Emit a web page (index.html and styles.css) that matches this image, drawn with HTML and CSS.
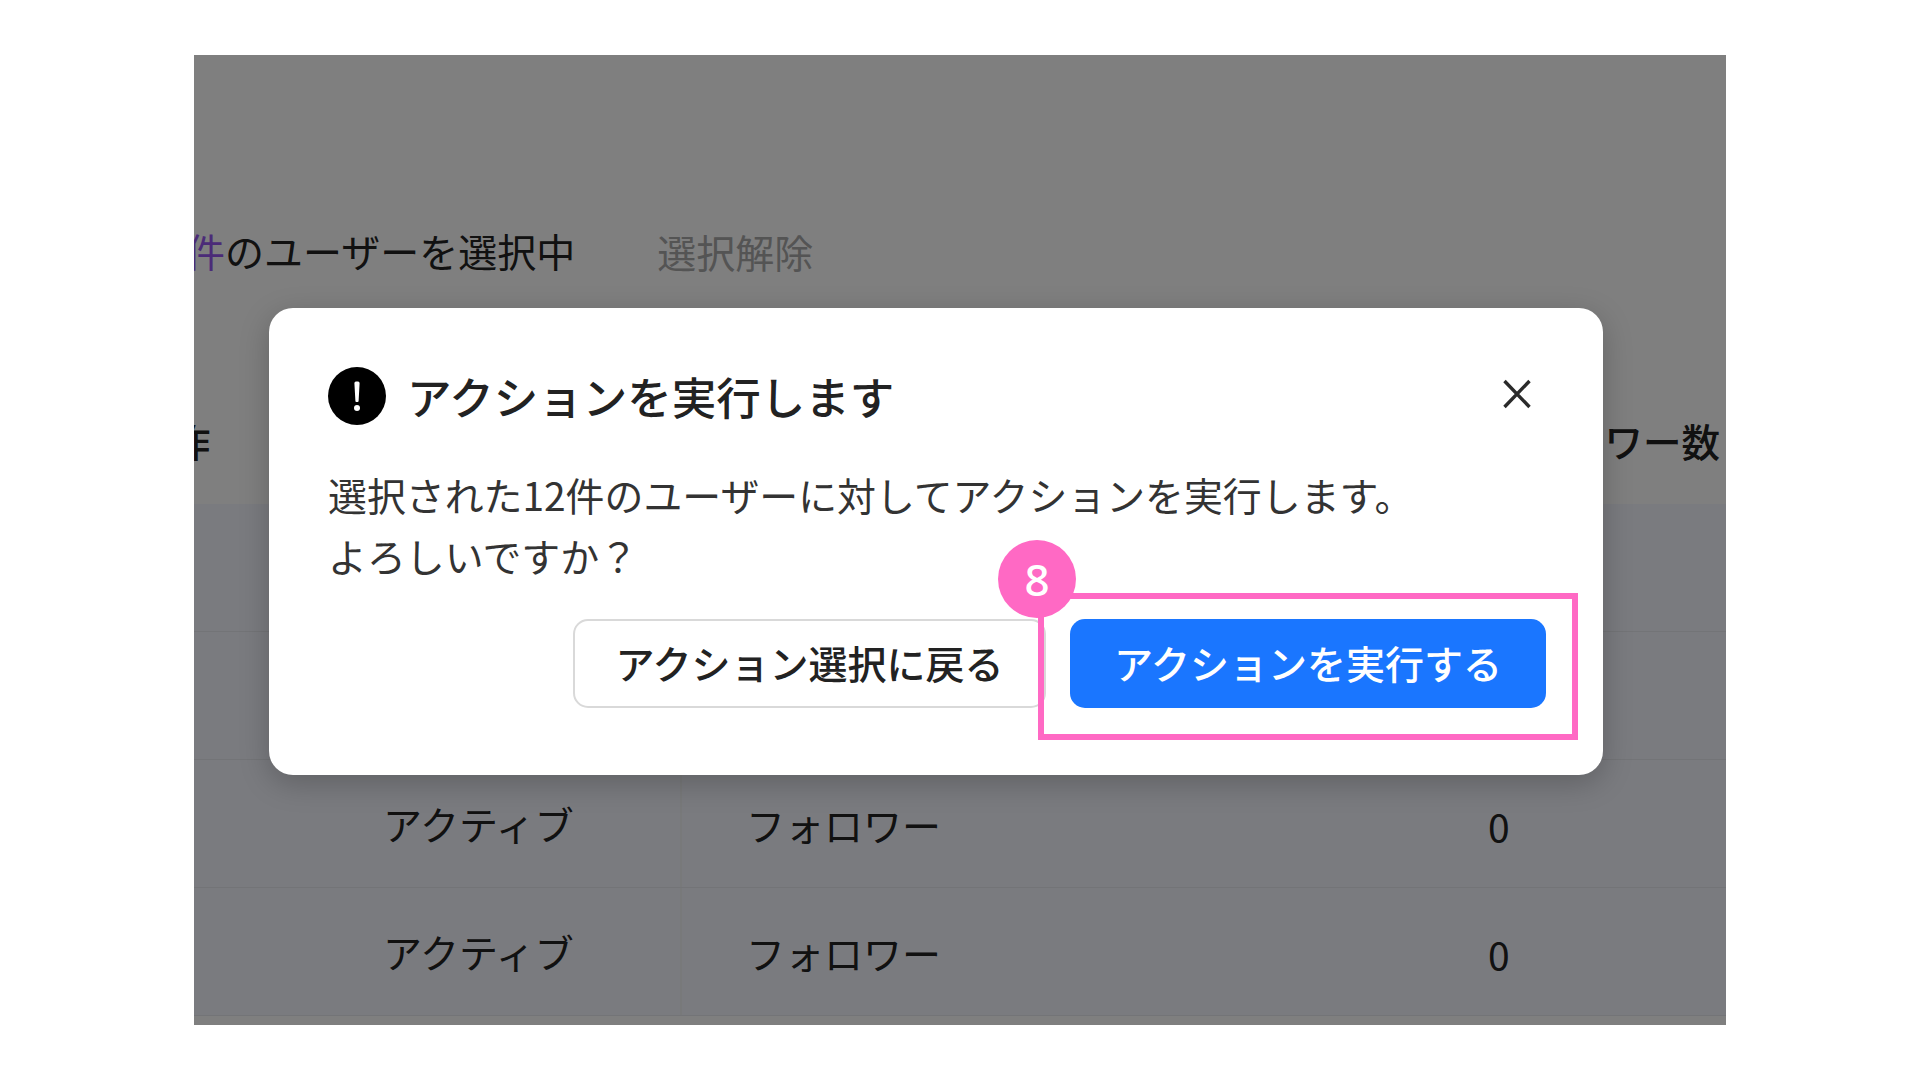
FILE: index.html
```html
<!DOCTYPE html>
<html lang="ja">
<head>
<meta charset="utf-8">
<title>アクションを実行します</title>
<link rel="stylesheet" href="styles.css">
</head>
<body>
<main class="panel">
  <div class="toolbar">
    <span class="selected"><span class="count">件</span>のユーザーを選択中</span>
    <span class="clear">選択解除</span>
  </div>
  <div class="table-head">
    <span class="head-action">作</span>
    <span class="head-followers">フォロワー数</span>
  </div>
  <div class="row"><span class="cell-status">アクティブ</span><span class="cell-type">フォロワー</span><span class="cell-num">0</span></div>
  <div class="row"><span class="cell-status">アクティブ</span><span class="cell-type">フォロワー</span><span class="cell-num">0</span></div>
  <div class="row"><span class="cell-status">アクティブ</span><span class="cell-type">フォロワー</span><span class="cell-num">0</span></div>
  <div class="row"><span class="cell-status">アクティブ</span><span class="cell-type">フォロワー</span><span class="cell-num">0</span></div>

  <div class="scrim"></div>

  <section class="modal">
    <header class="modal-head">
      <svg class="alert" viewBox="0 0 58 58" aria-hidden="true">
        <circle cx="29" cy="29" r="29" fill="#000"/>
        <path d="M26.4 16.2c0-1 .7-1.6 2.6-1.6s2.6.6 2.6 1.6L30.6 34c0 .6-.5 1-1.6 1s-1.6-.4-1.6-1z" fill="#fff"/>
        <circle cx="29" cy="41" r="3" fill="#fff"/>
      </svg>
      <h1 class="modal-title">アクションを実行します</h1>
      <svg class="close" viewBox="0 0 30 30" aria-hidden="true">
        <path d="M2.5 2 27.5 28M27.5 2 2.5 28" stroke="#2a2a2a" stroke-width="3.4" fill="none"/>
      </svg>
    </header>
    <p class="modal-body">選択された12件のユーザーに対してアクションを実行します。<br>よろしいですか？</p>
    <div class="modal-actions">
      <button class="btn btn-back">アクション選択に戻る</button>
      <button class="btn btn-run">アクションを実行する</button>
    </div>
  </section>

  <div class="callout"></div>
  <div class="badge">8</div>
</main>
</body>
</html>
```

FILE: styles.css
```css
* { box-sizing: border-box; }
html, body { margin: 0; height: 100%; }
body {
  background: #fff;
  padding: 55px 194px;
  font-family: "Noto Sans CJK JP", "Noto Sans", sans-serif;
  color: #222;
}
.panel {
  position: relative;
  width: 1532px;
  height: 970px;
  overflow: hidden;
  background: #fff;
}
.toolbar {
  display: flex;
  align-items: center;
  gap: 82px;
  height: 327px;
  padding-top: 167px;
  padding-bottom: 104px;
  margin-left: -8px;
  font-size: 39px;
  line-height: 56px;
  white-space: nowrap;
}
.count { color: #9656f0; }
.clear { color: #a8a8a8; padding-top: 2px; }
.table-head {
  display: flex;
  justify-content: space-between;
  align-items: center;
  height: 122px;
  padding-right: 6px;
  padding-bottom: 6px;
  margin-left: -22px;
  font-size: 38.5px;
  font-weight: 500;
  white-space: nowrap;
}
.row {
  display: grid;
  grid-template-columns: 486px 808px 1fr;
  align-items: center;
  height: 128px;
  background: #f5f7fe;
  border-bottom: 1px solid #e6e8ef;
  font-size: 39px;
  white-space: nowrap;
}
.cell-status { padding: 0 0 2px 189px; }
.cell-type {
  padding: 2px 0 0 64px;
  line-height: 125px;
  border-left: 2px solid #f0f2f4;
}
.cell-num { padding-top: 4px; }
.scrim {
  position: absolute;
  inset: 0;
  background: rgba(0, 0, 0, .5);
}
.modal {
  position: absolute;
  left: 75px;
  top: 253px;
  width: 1334px;
  height: 467px;
  padding: 59px 57px 66px 59px;
  background: #fff;
  border-radius: 24px;
  box-shadow: 0 8px 30px rgba(0, 0, 0, .22);
  display: flex;
  flex-direction: column;
}
.modal-head {
  display: flex;
  align-items: center;
  height: 58px;
}
.alert { width: 58px; height: 58px; flex: none; }
.modal-title {
  margin: 0 0 0 21px;
  font-size: 44.5px;
  font-weight: 500;
  line-height: 58px;
  color: #222;
}
.close {
  width: 30px;
  height: 30px;
  margin: -4px 14px 0 auto;
}
.modal-body {
  margin: 39px 0 33px;
  font-size: 38.9px;
  line-height: 61px;
  color: #333;
  white-space: nowrap;
}
.modal-actions {
  display: flex;
  justify-content: flex-end;
  gap: 24px;
}
.btn {
  width: 473px;
  height: 89px;
  padding: 0 0 3px;
  border-radius: 15px;
  font-family: inherit;
  font-size: 39px;
  font-weight: 500;
}
.btn-back {
  background: #fff;
  border: 2px solid #d9d9d9;
  color: #222;
}
.btn-run {
  width: 476px;
  background: #1a76ff;
  border: 0;
  color: #fff;
}
.callout {
  position: absolute;
  left: 844px;
  top: 538px;
  width: 540px;
  height: 147px;
  border: 6px solid #ff69c4;
}
.badge {
  position: absolute;
  left: 804px;
  top: 485px;
  width: 78px;
  height: 78px;
  border-radius: 50%;
  background: #ff69c4;
  color: #fff;
  font-family: "Noto Sans", sans-serif;
  font-size: 44px;
  font-weight: 500;
  line-height: 78px;
  text-align: center;
}
```
